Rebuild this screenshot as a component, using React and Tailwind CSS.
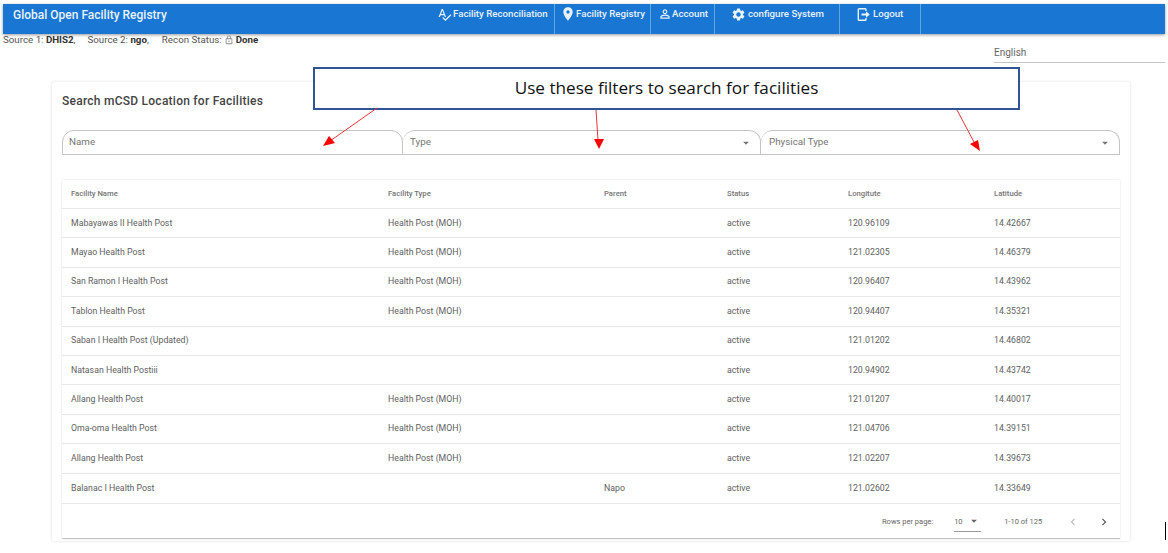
import { MdArrowDropDown, MdChevronLeft, MdChevronRight, MdLocationOn, MdOutlineLock, MdPersonOutline, MdSettings, MdSpellcheck } from 'react-icons/md';

const rows = [
    ['Mabayawas II Health Post', 'Health Post (MOH)', '', 'active', '120.96109', '14.42667'],
    ['Mayao Health Post', 'Health Post (MOH)', '', 'active', '121.02305', '14.46379'],
    ['San Ramon I Health Post', 'Health Post (MOH)', '', 'active', '120.96407', '14.43962'],
    ['Tablon Health Post', 'Health Post (MOH)', '', 'active', '120.94407', '14.35321'],
    ['Saban I Health Post (Updated)', '', '', 'active', '121.01202', '14.46802'],
    ['Natasan Health Postiii', '', '', 'active', '120.94902', '14.43742'],
    ['Allang Health Post', 'Health Post (MOH)', '', 'active', '121.01207', '14.40017'],
    ['Oma-oma Health Post', 'Health Post (MOH)', '', 'active', '121.04706', '14.39151'],
    ['Allang Health Post', 'Health Post (MOH)', '', 'active', '121.02207', '14.39673'],
    ['Balanac I Health Post', '', 'Napo', 'active', '121.02602', '14.33649'],
];

const headers = ['Facility Name', 'Facility Type', 'Parent', 'Status', 'Longitute', 'Latitude'];
const gridCols = 'grid grid-cols-[317px_216px_123px_121px_146px_1fr] items-center pl-[9px]';

const NavItem = ({ icon, label, className }) => (
    <div className={`flex h-full items-center border-r border-[#64a4e3] pb-[10px] ${className}`}>
        {icon}
        <span className="text-[9.7px] font-medium text-[#e8f2fb]">{label}</span>
    </div>
);

const FilterField = ({ label, select, className }) => (
    <div className={`flex h-[25px] items-center justify-between rounded-t-[12px] border border-[#c4c4c4] pr-[7px] ${className}`}>
        <span className="text-[9.8px] text-[#757575]">{label}</span>
        {select && <MdArrowDropDown className="text-[14px] text-[#757575]" />}
    </div>
);

const LogoutIcon = () => (
    <svg width="15" height="15" viewBox="0 0 15 15" fill="none" className="text-[#e8f2fb]">
        <path d="M10 4V2.6A.9.9 0 0 0 9.100 1.700H3.200a.9.9 0 0 0-.9.9v9.800a.9.9 0 0 0 .9.9h5.900a.9.9 0 0 0 .9-.9V11" stroke="currentColor" strokeWidth="1.400" />
        <path d="M5.500 6.500h4.500V4.300l3.800 3.200-3.800 3.200V8.500H5.500z" fill="currentColor" />
    </svg>
);

const App = () => {
    return (
        <div className="relative h-[553px] w-[1168px] overflow-hidden bg-white pt-[4px] font-['Roboto',sans-serif]">
            <div className="ml-[3px] flex h-[30px] w-[1162px] items-center bg-[#1976d2] pl-[10px] shadow-[0_1px_3px_rgba(0,0,0,0.4)]">
                <div className="w-[424px] pb-[9px] text-[12px] font-medium text-[#e8f2fb]">Global Open Facility Registry</div>
                <NavItem
                    label="Facility Reconciliation"
                    className="w-[118px] gap-[1px]"
                    icon={<MdSpellcheck className="text-[15px] text-[#e8f2fb]" />}
                />
                <NavItem
                    label="Facility Registry"
                    className="w-[96px] pl-[5px]"
                    icon={<MdLocationOn className="text-[16px] text-[#e8f2fb]" />}
                />
                <NavItem
                    label="Account"
                    className="w-[64px] pl-[7px]"
                    icon={<MdPersonOutline className="text-[14px] text-[#e8f2fb]" />}
                />
                <NavItem
                    label="configure System"
                    className="w-[125px] gap-[2px] pl-[16px]"
                    icon={<MdSettings className="text-[15px] text-[#e8f2fb]" />}
                />
                <NavItem
                    label="Logout"
                    className="w-[81px] gap-[2px] pl-[16px]"
                    icon={<LogoutIcon />}
                />
            </div>

            <div className="flex items-start justify-between pl-[3px] pr-[3px]">
                <div className="-mt-px flex items-center text-[9.75px] text-[#555]">
                    <span>Source 1: <b className="font-bold text-[#333]">DHIS2</b>,</span>
                    <span className="ml-[12px]">Source 2: <b className="font-bold text-[#333]">ngo</b>,</span>
                    <span className="ml-[13px] flex items-center gap-[2px]">
                        Recon Status: <MdOutlineLock className="text-[10px] text-[#888]" /> <b className="font-bold text-[#333]">Done</b>
                    </span>
                </div>
                <div className="mt-[10px] h-[19px] w-[171px] border-b border-[#c4c4c4] text-[10px] leading-[17px] text-[#666]">English</div>
            </div>

            <div className="ml-[52px] mt-[19px] h-[459px] w-[1078px] rounded-[2px] bg-white px-[10px] pt-[12px] shadow-[0_0_3px_rgba(0,0,0,0.15)]">
                <h2 className="text-[12px] font-medium leading-[14px] tracking-[0.25px] text-[#444]">Search mCSD Location for Facilities</h2>
                <div className="mt-[22px] flex">
                    <FilterField label="Name" className="w-[341px] pl-[6px]" />
                    <FilterField label="Type" select className="w-[358px] border-l-0 pl-[7px]" />
                    <FilterField label="Physical Type" select className="w-[359px] border-l-0 pl-[8px]" />
                </div>
                <div className="mt-[25px] w-[1058px] shadow-[0_0_2px_rgba(0,0,0,0.15)]">
                    <div className={`${gridCols} h-[29px] border-b border-[#e8e8e8] text-[7.7px] font-medium text-[#757575]`}>
                        {headers.map((h) => (
                            <div key={h}>{h}</div>
                        ))}
                    </div>
                    {rows.map((row, i) => (
                        <div key={i} className={`${gridCols} ${i === 9 ? 'h-[30.4px]' : 'h-[29.4px]'} border-b border-[#e8e8e8] text-[8.75px] text-[#616161]`}>
                            {row.map((cell, j) => (
                                <div key={j}>{cell}</div>
                            ))}
                        </div>
                    ))}
                    <div className="flex h-[35px] items-center border-b border-[#c4c4c4] pl-[820px] pt-[2px] text-[7.5px] text-[#666]">
                        <span>Rows per page:</span>
                        <div className="ml-[21px] flex h-[20px] w-[27px] items-center justify-between border-b border-[#999]">
                            <span>10</span>
                            <MdArrowDropDown className="text-[14px]" />
                        </div>
                        <span className="ml-[23px]">1-10 of 125</span>
                        <MdChevronLeft className="ml-[24px] text-[14px] text-[#bbb]" />
                        <MdChevronRight className="ml-[17px] text-[14px] text-[#555]" />
                    </div>
                </div>
            </div>

            <div className="absolute left-[313px] top-[67px] flex h-[43px] w-[707px] items-center justify-center border-2 border-[#2f5597] bg-white pb-[2px] font-['Open_Sans',sans-serif] text-[17.15px] text-[#111]">
                Use these filters to search for facilities
            </div>

            <svg className="absolute left-0 top-0" width="1168" height="553" fill="none">
                <line x1="377" y1="108" x2="330" y2="141" stroke="#e8333a" />
                <polygon points="323,146 329,136 335,143" fill="#f00" />
                <line x1="596" y1="110" x2="598" y2="140" stroke="#e8333a" />
                <polygon points="594,139 604,139 599,149" fill="#f00" />
                <line x1="957" y1="110" x2="974" y2="142" stroke="#e8333a" />
                <polygon points="970,144 978,140 980,151" fill="#f00" />
            </svg>

            <div className="absolute left-[1165px] top-[522px] h-[18px] w-[1px] bg-black" />
        </div>
    );
};

export default App;
